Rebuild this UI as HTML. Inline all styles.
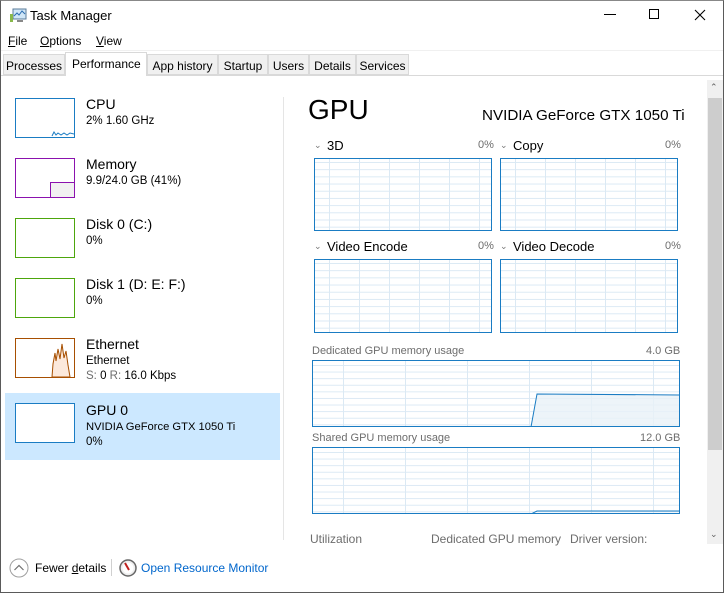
<!DOCTYPE html>
<html><head><style>
*{margin:0;padding:0;box-sizing:border-box}
body{width:724px;height:593px;background:#fff;font-family:"Liberation Sans",sans-serif;font-size:12px;color:#000;position:relative;overflow:hidden}
.a{position:absolute;white-space:nowrap}
.win{position:absolute;left:0;top:0;width:724px;height:593px;border:1px solid #5a5a5a;border-top-color:#888}
.tab{position:absolute;top:54px;height:21px;background:#f0f0f0;border:1px solid #d9d9d9;font-size:12px;padding:4px 0 0 0;text-align:center}
.th{position:absolute;border:1px solid #1a7cc3;overflow:hidden;
background-image:linear-gradient(#dbe9f4 1px,transparent 1px),linear-gradient(90deg,#dbe9f4 1px,transparent 1px);background-color:#fff}
.small{background-size:100% 7.2px,30px 100%;background-position:0 3px,14px 0}
.big{background-size:100% 6.6px,62px 100%;background-position:0 4px,30px 0}
.thumb{position:absolute;left:15px;width:60px;height:40px;border:1px solid}
.sub{font-size:11.5px}
.lbl{font-size:14px}
.g{color:#6d6d6d}
.chev{position:absolute;font-size:9px;color:#777}
</style></head><body>
<div class="win"></div>
<svg class="a" style="left:9px;top:8px" width="18" height="16"><rect x="4" y="1" width="13" height="10" fill="#cfe6f7" stroke="#5a7b99"/><polyline points="5,8 8,5 10,7 13,3 16,6" fill="none" stroke="#2a6cb0"/><rect x="1" y="6" width="3" height="8" fill="#88b84a"/><rect x="8" y="12" width="6" height="2" fill="#888"/></svg>
<div class="a" style="left:30px;top:8px;font-size:13px">Task Manager</div>
<div class="a" style="left:604px;top:14px;width:12px;height:1px;background:#000"></div>
<div class="a" style="left:649px;top:9px;width:10px;height:10px;border:1px solid #000"></div>
<svg class="a" style="left:694px;top:9px" width="12" height="12"><path d="M1 1L11 11M11 1L1 11" stroke="#000" stroke-width="1.1"/></svg>
<div class="a" style="left:8px;top:34px"><u>F</u>ile</div>
<div class="a" style="left:40px;top:34px"><u>O</u>ptions</div>
<div class="a" style="left:96px;top:34px"><u>V</u>iew</div>
<div class="a" style="left:1px;top:50px;width:722px;height:1px;background:#f0f0f0"></div>
<div class="tab" style="left:3px;width:62px">Processes</div>
<div class="tab" style="left:147px;width:71px">App history</div>
<div class="tab" style="left:218px;width:50px">Startup</div>
<div class="tab" style="left:268px;width:41px">Users</div>
<div class="tab" style="left:309px;width:47px">Details</div>
<div class="tab" style="left:356px;width:53px">Services</div>
<div class="a" style="left:1px;top:75px;width:722px;height:1px;background:#d9d9d9"></div>
<div class="a" style="left:65px;top:52px;width:82px;height:24px;background:#fff;border:1px solid #d9d9d9;border-bottom:none;padding:4px 0 0 6px">Performance</div>
<div class="a" style="left:5px;top:393px;width:275px;height:67px;background:#cce8ff"></div>
<div class="thumb" style="top:98px;border-color:#1a7cc3"><svg width="58" height="38"><polyline points="36,37 38,33 40,36 42,34 45,36 48,34 51,36 54,34 58,35" fill="none" stroke="#1a7cc3"/></svg></div>
<div class="a lbl" style="left:86px;top:96px">CPU</div><div class="a sub" style="left:86px;top:115px">2% 1.60 GHz</div>
<div class="thumb" style="top:158px;border-color:#8b12ae"><div style="position:absolute;left:34px;top:23px;width:24px;height:15px;background:#f1f1f1;border-left:1px solid #8b12ae;border-top:1px solid #8b12ae"></div></div>
<div class="a lbl" style="left:86px;top:156px">Memory</div><div class="a sub" style="left:86px;top:175px">9.9/24.0 GB (41%)</div>
<div class="thumb" style="top:218px;border-color:#4da60c"></div>
<div class="a lbl" style="left:86px;top:216px">Disk 0 (C:)</div><div class="a sub" style="left:86px;top:235px">0%</div>
<div class="thumb" style="top:278px;border-color:#4da60c"></div>
<div class="a lbl" style="left:86px;top:276px">Disk 1 (D: E: F:)</div><div class="a sub" style="left:86px;top:295px">0%</div>
<div class="thumb" style="top:338px;border-color:#a74f01"><svg width="58" height="38"><polygon points="36,38 37,25 39,14 40,22 42,10 44,20 46,5 48,19 50,12 52,26 54,38" fill="#fce9dc" stroke="#a74f01"/></svg></div>
<div class="a lbl" style="left:86px;top:336px">Ethernet</div><div class="a sub" style="left:86px;top:355px">Ethernet</div>
<div class="a sub" style="left:86px;top:370px"><span class="g">S:</span> 0 <span class="g">R:</span> 16.0 Kbps</div>
<div class="thumb" style="top:403px;border-color:#1a7cc3;background:#fff"></div>
<div class="a lbl" style="left:86px;top:402px">GPU 0</div><div class="a sub" style="left:86px;top:421px;font-size:11.2px">NVIDIA GeForce GTX 1050 Ti</div><div class="a sub" style="left:86px;top:436px">0%</div>
<div class="a" style="left:283px;top:97px;width:1px;height:443px;background:#e5e5e5"></div>
<div class="a" style="left:308px;top:94px;font-size:28px">GPU</div>
<div class="a" style="left:482px;top:107px;font-size:15.2px">NVIDIA GeForce GTX 1050 Ti</div>
<div class="chev" style="left:314px;top:140px">&#8964;</div><div class="a" style="left:327px;top:138px;font-size:13px">3D</div>
<div class="a g" style="left:478px;top:139px;font-size:11px">0%</div>
<div class="chev" style="left:500px;top:140px">&#8964;</div><div class="a" style="left:513px;top:138px;font-size:13px">Copy</div>
<div class="a g" style="left:665px;top:139px;font-size:11px">0%</div>
<div class="th small" style="left:314px;top:158px;width:178px;height:73px"></div>
<div class="th small" style="left:500px;top:158px;width:178px;height:73px"></div>
<div class="chev" style="left:314px;top:241px">&#8964;</div><div class="a" style="left:327px;top:239px;font-size:13px">Video Encode</div>
<div class="a g" style="left:478px;top:240px;font-size:11px">0%</div>
<div class="chev" style="left:500px;top:241px">&#8964;</div><div class="a" style="left:513px;top:239px;font-size:13px">Video Decode</div>
<div class="a g" style="left:665px;top:240px;font-size:11px">0%</div>
<div class="th small" style="left:314px;top:259px;width:178px;height:74px"></div>
<div class="th small" style="left:500px;top:259px;width:178px;height:74px"></div>
<div class="a g" style="left:312px;top:345px;font-size:11px">Dedicated GPU memory usage</div>
<div class="a g" style="left:646px;top:345px;font-size:11px">4.0 GB</div>
<div class="th big" style="left:312px;top:360px;width:368px;height:67px"><svg style="position:absolute;left:0;top:0" width="368" height="67"><polygon points="218,66 224,33 368,34 368,67" fill="#e8f1f8" fill-opacity=".8" stroke="#1a7cc3"/></svg></div>
<div class="a g" style="left:312px;top:432px;font-size:11px">Shared GPU memory usage</div>
<div class="a g" style="left:640px;top:432px;font-size:11px">12.0 GB</div>
<div class="th big" style="left:312px;top:447px;width:368px;height:67px"><svg style="position:absolute;left:0;top:0" width="368" height="67"><polyline points="218,66 224,63 368,63" fill="none" stroke="#1a7cc3"/></svg></div>
<div class="a g" style="left:310px;top:532px;font-size:12px">Utilization</div>
<div class="a g" style="left:431px;top:532px;font-size:12px">Dedicated GPU memory</div>
<div class="a g" style="left:570px;top:532px;font-size:12px">Driver version:</div>
<div class="a" style="left:707px;top:80px;width:16px;height:464px;background:#f0f0f0"></div>
<div class="a" style="left:708px;top:98px;width:14px;height:352px;background:#cdcdcd"></div>
<div class="a" style="left:710px;top:82px;font-size:9px;color:#606060">&#8963;</div>
<div class="a" style="left:710px;top:529px;font-size:9px;color:#606060">&#8964;</div>
<svg class="a" style="left:9px;top:558px" width="20" height="20"><circle cx="10" cy="10" r="9" fill="#fff" stroke="#a0a0a0"/><path d="M5.5 12L10 7.5 14.5 12" fill="none" stroke="#707070" stroke-width="1.2"/></svg>
<div class="a" style="left:35px;top:561px">Fewer <u>d</u>etails</div>
<div class="a" style="left:111px;top:559px;width:1px;height:17px;background:#d0d0d0"></div>
<svg class="a" style="left:119px;top:559px" width="18" height="18"><circle cx="9" cy="9" r="8" fill="#eee" stroke="#666" stroke-width="1.5"/><circle cx="9" cy="9" r="5.5" fill="#fff"/><path d="M6 4L10 11" stroke="#c0201d" stroke-width="2"/></svg>
<div class="a" style="left:141px;top:561px;color:#0066cc">Open Resource Monitor</div>
</body></html>
